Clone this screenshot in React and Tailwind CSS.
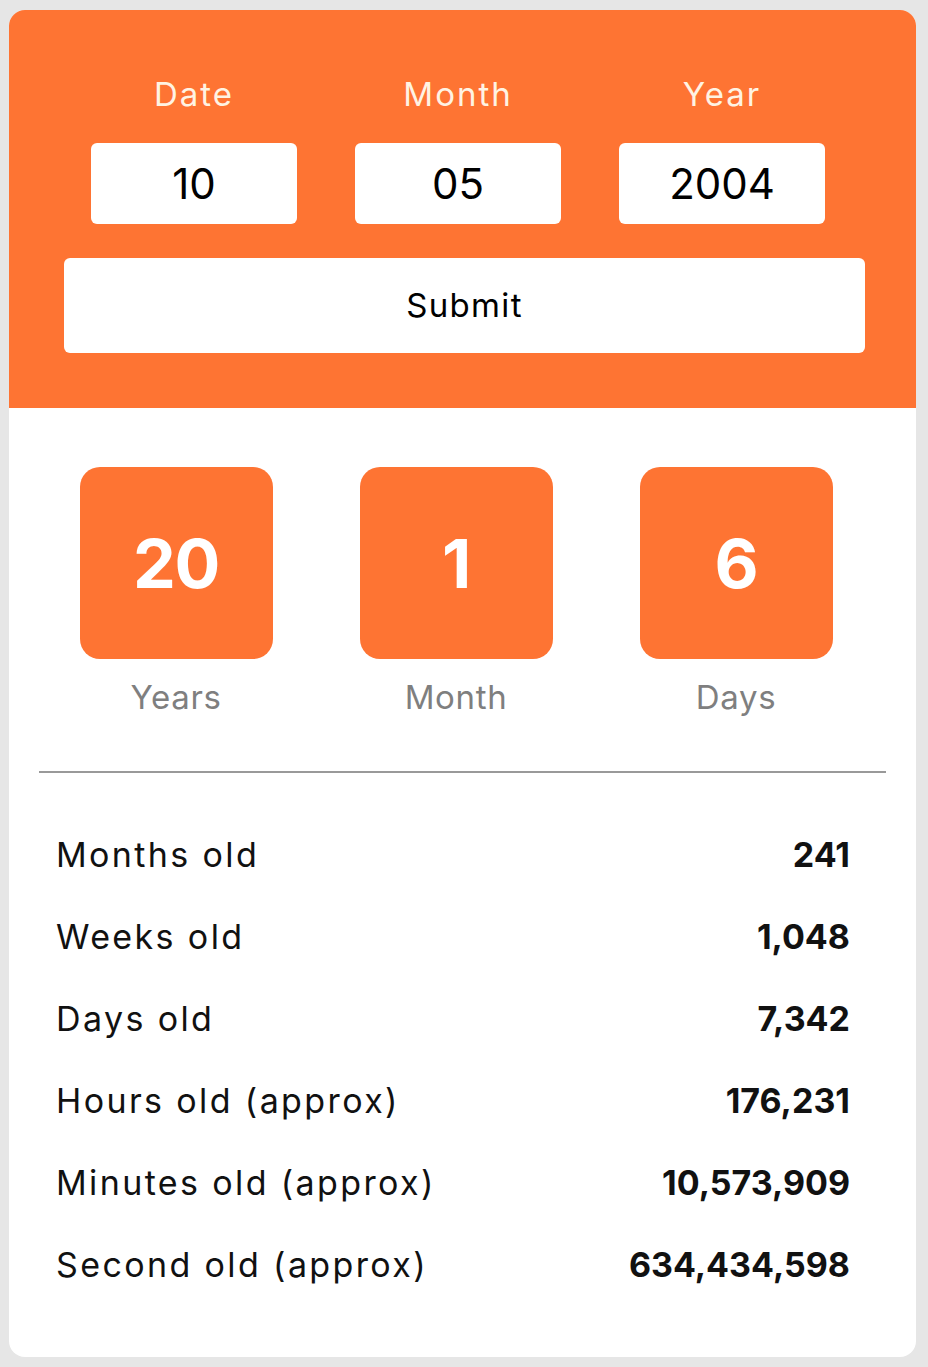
import React from 'react';

const stats = [
  ['Months old', '241'],
  ['Weeks old', '1,048'],
  ['Days old', '7,342'],
  ['Hours old (approx)', '176,231'],
  ['Minutes old (approx)', '10,573,909'],
  ['Second old (approx)', '634,434,598'],
];

const App = () => {
  return (
    <div className="min-h-[1367px] bg-[#e6e6e6] pt-[10px] pl-[9px] pr-[12px] pb-[10px] font-['Inter',sans-serif]">
      <div className="bg-white rounded-[16px] overflow-hidden h-[1347px]">
        {/* input header */}
        <div className="bg-[#fe7433] h-[398px] pt-[64px]">
          <div className="flex gap-[58px] pl-[82px]">
            {[['Date', '10'], ['Month', '05'], ['Year', '2004']].map(([label, val]) => (
              <div key={label} className="w-[206px] flex flex-col items-center">
                <div className="text-[33px] leading-[40px] tracking-[0.06em] text-[#fff3e3]">{label}</div>
                <div className="mt-[29px] w-full h-[81px] bg-white rounded-[6px] flex items-center justify-center text-[42px] text-black">
                  {val}
                </div>
              </div>
            ))}
          </div>
          <button className="mt-[34px] ml-[55px] w-[801px] h-[95px] bg-white rounded-[6px] text-[33px] tracking-[0.04em] text-black">
            Submit
          </button>
        </div>

        {/* result boxes */}
        <div className="flex justify-center gap-[87px] pt-[59px] pr-[13px]">
          {[['20', 'Years'], ['1', 'Month'], ['6', 'Days']].map(([num, label]) => (
            <div key={label} className="flex flex-col items-center">
              <div className="w-[193px] h-[192px] bg-[#fe7433] rounded-[20px] flex items-center justify-center text-white font-bold text-[68px] tracking-[-0.02em]">
                {num}
              </div>
              <div className="mt-[18px] text-[33px] leading-[40px] tracking-[0.02em] text-[#7f7f7f]">{label}</div>
            </div>
          ))}
        </div>

        <div className="mt-[54px] mx-[30px] h-[2px] bg-[#999999]" />

        <div className="mt-[40px] pl-[47px] pr-[66px] flex flex-col">
          {stats.map(([label, val]) => (
            <div key={label} className="flex justify-between items-center h-[82px] text-[34px] text-[#111]">
              <span className="tracking-[0.07em]">{label}</span>
              <span className="font-bold">{val}</span>
            </div>
          ))}
        </div>
      </div>
    </div>
  );
};

export default App;
